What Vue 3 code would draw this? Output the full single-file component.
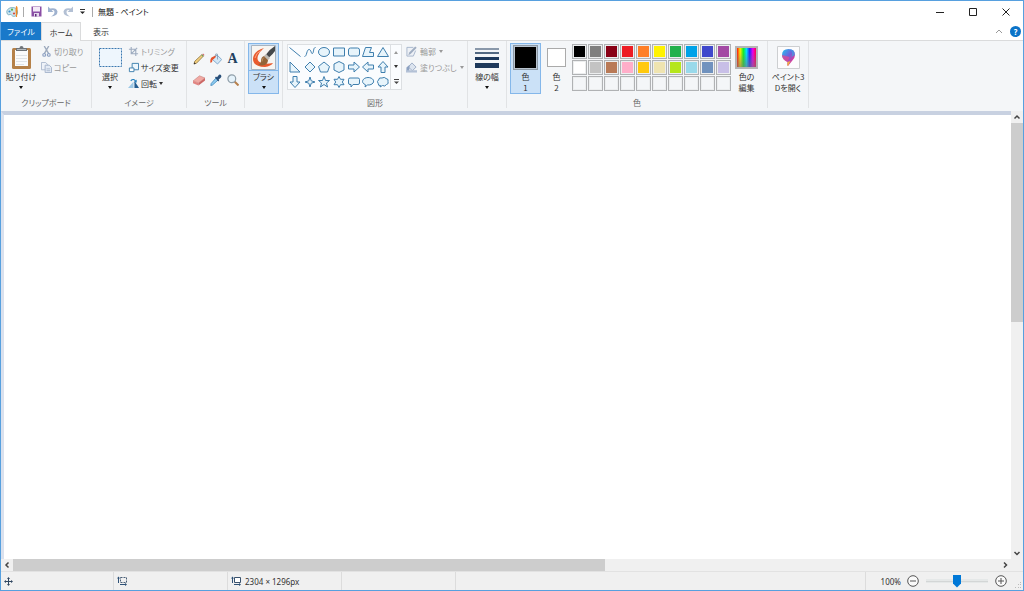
<script setup>
import { ref } from 'vue'

// palette, three rows of ten (the last row is for custom colours)
const colors = [
  '#000000', '#7f7f7f', '#880015', '#ed1c24', '#ff7f27', '#fff200', '#22b14c', '#00a2e8', '#3f48cc', '#a349a4',
  '#ffffff', '#c3c3c3', '#b97a57', '#ffaec9', '#ffc90e', '#efe4b0', '#b5e61d', '#99d9ea', '#7092be', '#c8bfe7',
  '', '', '', '', '', '', '', '', '', ''
]

// outlines for the shape gallery, on a 14 x 14 grid
const shapes = [
  { name: '直線', d: 'M1.500 2.500L12.500 11.500' },
  { name: '曲線', d: 'M1.500 11.500C4 11.500 3.500 4.500 6 4.500S8 9.500 9.500 8.500S10 2.500 12.500 2.500' },
  { name: '楕円', d: 'M1.500 7a5.500 4.500 0 1 0 11 0a5.500 4.500 0 1 0 -11 0z' },
  { name: '四角形', d: 'M1.500 3h11v8h-11z' },
  { name: '角丸四角形', d: 'M3.500 3h7q2 0 2 2v4q0 2-2 2h-7q-2 0-2-2v-4q0-2 2-2z' },
  { name: '多角形', d: 'M4.500 2.500H10.500L8.500 7.500H12.500V11.500H1.500z' },
  { name: '三角形', d: 'M7 2.500L12.500 11.500h-11z' },
  { name: '直角三角形', d: 'M2 2L12 12H2z' },
  { name: 'ひし形', d: 'M7 2L12 7L7 12L2 7z' },
  { name: '五角形', d: 'M7 2L12.500 6.500L10.500 12h-7L1.500 6.500z' },
  { name: '六角形', d: 'M7 1.500L12 4v6L7 12.500L2 10V4z' },
  { name: '右矢印', d: 'M1.500 5h5.500V2L12.500 7L7 12V9H1.500z' },
  { name: '左矢印', d: 'M12.500 5H7V2L1.500 7L7 12V9h5.500z' },
  { name: '上矢印', d: 'M5 12.500V7H2L7 1.500L12 7H9v5.500z' },
  { name: '下矢印', d: 'M5 1.500V7H2L7 12.500L12 7H9V1.500z' },
  { name: '星 4', d: 'M7 2L8.200 5.800L12 7L8.200 8.200L7 12L5.800 8.200L2 7L5.800 5.800z' },
  { name: '星 5', d: 'M7 1.500L8.500 5.500H12.500L9.500 8L10.500 12L7 9.500L3.500 12L4.500 8L1.500 5.500H5.500z' },
  { name: '星 6', d: 'M7 1.500L8.500 4.300H12L10.300 7L12 9.700H8.500L7 12.500L5.500 9.700H2L3.700 7L2 4.300H5.500z' },
  { name: '角丸吹き出し', d: 'M3 3h8q1.500 0 1.500 1.500v3.500q0 1.500-1.500 1.500H6L4 12V9.500H3Q1.500 9.500 1.500 8V4.500Q1.500 3 3 3z' },
  { name: '楕円吹き出し', d: 'M4 12L4.500 9.800C-1 7.500 2 2.500 7 2.500S14.500 6.500 11 9Q9 10.300 6.500 10z' },
  { name: '雲吹き出し', d: 'M4.500 10.500Q2 11 2.200 8.500Q.5 6.500 2.500 5Q3 2 6 3Q8.500 1.500 10 3.500Q13 4 12 6.500Q13 9 10.500 9.500Q9 12 6.500 10.500L4 12z' }
]

const zoom = ref(50)
const activeColor = ref(1)
</script>

<template>
  <div class="window" lang="ja">
    <!-- Title bar -->
    <header class="titlebar">
      <svg class="logo" viewBox="0 0 13 13">
        <path d="M1 8C0 5 3 2.500 6.500 2.500S12 5 11.500 8S8 12 6.500 11S5.500 9 4 9.500S1.500 10 1 8z" fill="#cfe6ee" stroke="#6aa5ba" stroke-width=".8" />
        <circle cx="3.500" cy="6.500" r="1.100" fill="#3c91cf" />
        <circle cx="6" cy="4.700" r="1.100" fill="#55ae47" />
        <circle cx="8" cy="8.500" r="1.100" fill="#d94b3c" />
        <path d="M10 1q2 0 1.500 4l-.5 7h-1L9.500 5z" fill="#f08b24" />
      </svg>
      <span class="bar"></span>
      <button class="quick" aria-label="上書き保存">
        <svg viewBox="0 0 11 11"><path d="M.5.5h10v10H.5z" fill="#8a4ea5" /><path d="M2 1h7v4.500H2z" fill="#f3eaf7" /><path d="M3 7h5v3.500H3z" fill="#e4d8ec" /><path d="M4 8h1.500v2.500H4z" fill="#5b2b78" /></svg>
      </button>
      <button class="quick" aria-label="元に戻す">
        <svg viewBox="0 0 11 11"><path d="M1 .5v5.500h5.500L4.600 4.200Q7.500 3.500 7.500 6Q7.500 8.500 4 10.500Q10.500 10 10.500 5.500Q9.500 1 3 2.500z" fill="#9fb2cf" /></svg>
      </button>
      <button class="quick" aria-label="やり直し">
        <svg viewBox="0 0 11 11"><path d="M10 .5v5.500H4.500l1.900-1.800Q3.500 3.500 3.500 6Q3.500 8.500 7 10.500Q.5 10 .5 5.500Q1.500 1 8 2.500z" fill="#b3c0d4" /></svg>
      </button>
      <button class="quick more" aria-label="クイック アクセス ツール バーのカスタマイズ">
        <svg viewBox="0 0 7 7"><path d="M1 1.500h5" stroke="#333" /><path d="M1 3.500h5L3.500 6z" fill="#222" /></svg>
      </button>
      <span class="bar"></span>
      <h1>無題 - ペイント</h1>
      <div class="controls">
        <button aria-label="最小化"><svg viewBox="0 0 10 10"><path d="M1 5.500h8" /></svg></button>
        <button aria-label="最大化"><svg viewBox="0 0 10 10"><path d="M1.500 1.500h7v7h-7z" /></svg></button>
        <button aria-label="閉じる"><svg viewBox="0 0 10 10"><path d="M1.500 1.500l7 7M8.500 1.500l-7 7" /></svg></button>
      </div>
    </header>

    <!-- Tabs -->
    <nav class="tabs">
      <button class="tab file">ファイル</button>
      <button class="tab current">ホーム</button>
      <button class="tab">表示</button>
      <div class="tab-tools">
        <button aria-label="リボンの最小化"><svg viewBox="0 0 10 10"><path d="M2 7L5 4l3 3" fill="none" stroke="#999" /></svg></button>
        <button class="help" aria-label="ヘルプ">?</button>
      </div>
    </nav>

    <!-- Ribbon -->
    <div class="ribbon">
      <section class="group clipboard">
        <div class="body">
          <button class="big">
            <span class="pic">
              <svg width="21" height="25" viewBox="0 0 21 25">
                <rect x="1" y="3" width="19" height="21" rx="1.500" fill="#b58149" />
                <rect x="4" y="5" width="13" height="16" fill="#fafbfc" />
                <path d="M5 10.500h11M5 13.500h11M5 16.500h11M5 19.500h8" stroke="#dfe3e7" />
                <path d="M5 6V3h3.500Q8.500 1 10.500 1t2 2H16V6z" fill="#6f7479" />
                <path d="M6 4.500h9" stroke="#b5babd" />
              </svg>
            </span>
            <span>貼り付け</span>
            <i class="down"></i>
          </button>
          <div class="stack">
            <button class="small" disabled>
              <svg viewBox="0 0 12 12"><path d="M3.500 0l5 8.500M8.500 0l-5 8.500" stroke="#9daabd" stroke-width="1.500" fill="none" /><circle cx="3.500" cy="9.700" r="1.500" fill="none" stroke="#8ea2c4" stroke-width="1.300" /><circle cx="8.500" cy="9.700" r="1.500" fill="none" stroke="#8ea2c4" stroke-width="1.300" /></svg>
              切り取り
            </button>
            <button class="small" disabled>
              <svg viewBox="0 0 12 12"><path d="M.5.500h4.500l2 2v6H.5z" fill="#eef2f8" stroke="#a9b7cd" /><path d="M4.500 3.500h4.500l2.500 2.500v5.500h-7z" fill="#e4ebf5" stroke="#a2b1c9" /><path d="M6 7.500h4M6 9.500h4" stroke="#a9b7cd" /></svg>
              コピー
            </button>
          </div>
        </div>
        <h2>クリップボード</h2>
      </section>

      <section class="group image">
        <div class="body">
          <button class="big">
            <span class="pic">
              <svg width="23" height="19" viewBox="0 0 23 19"><path d="M.5.5h22v18H.5z" fill="#eef6fd" stroke="#3a78b0" stroke-dasharray="2 1" /></svg>
            </span>
            <span>選択</span>
            <i class="down"></i>
          </button>
          <div class="stack">
            <button class="small" disabled>
              <svg viewBox="0 0 12 12"><path d="M3.500 1v7.500H11M1 3.500h7.500V11M3.500 8.500L10 2" fill="none" stroke="#9eacc0" stroke-width="1.200" /></svg>
              トリミング
            </button>
            <button class="small">
              <svg viewBox="0 0 12 12"><path d="M4.500 1.500h7v7h-7z" fill="#eef7fd" stroke="#397cac" /><path d="M1.500 6.500h5v4h-5z" fill="#fff" stroke="#397cac" /></svg>
              サイズ変更
            </button>
            <button class="small">
              <svg viewBox="0 0 12 12"><path d="M6 4v7H0z" fill="#9cc8e6" /><path d="M7 3l5 8H7z" fill="#235d91" /><path d="M3 3Q6 0 8.500 3.500" fill="none" stroke="#1e7dbd" stroke-width="1.200" /><path d="M9.500 1.500v3.500H6.500z" fill="#1e7dbd" /></svg>
              回転 <i class="down"></i>
            </button>
          </div>
        </div>
        <h2>イメージ</h2>
      </section>

      <section class="group tools">
        <div class="body tool-grid">
          <button aria-label="鉛筆"><svg viewBox="0 0 12 12"><path d="M1 11l.8-2.800L8.800 1.700l1.500 1.500L3.500 10.200z" fill="#f3cf7c" stroke="#8d7440" stroke-width=".8" /><path d="M8.300 2.200l1-1 1.500 1.500-1 1z" fill="#6fa05c" /><path d="M9.300 1.200l.8-.7L11.500 2l-.7.700z" fill="#d5636a" /><path d="M.8 11.200l.5-2L2.800 10.700z" fill="#333" /></svg></button>
          <button aria-label="塗りつぶし"><svg viewBox="0 0 12 12"><path d="M2.500 6.500l4.500-4.500L11.700 6.500L7.500 11z" fill="#d3e7f6" stroke="#7ba5cb" stroke-width=".9" /><path d="M7.500 6.500V1.200Q5.500-.5 5 3.500" fill="none" stroke="#8098ad" stroke-width=".8" /><path d="M5.500 2.500L1.500 4.500Q-.2 6.500 .5 10Q2.500 9.500 2.500 7L5.500 4.500z" fill="#e5532c" /></svg></button>
          <button class="letter" aria-label="テキスト">A</button>
          <button aria-label="消しゴム"><svg viewBox="0 0 12 12"><path d="M0 7l6.500-5.200L12 4L5.500 9z" fill="#f0aaa4" stroke="#c98482" stroke-width=".6" /><path d="M0 7l5.500 2V11.500L0 9.200z" fill="#e28582" /><path d="M5.500 9l6.500-5v2.500l-6.500 5z" fill="#cd6866" /></svg></button>
          <button aria-label="色の選択"><svg viewBox="0 0 12 12"><path d="M6 4l2 2-5.500 5L.8 11.500 1.200 9.500z" fill="#8ecbf0" stroke="#3b86bd" stroke-width=".8" /><path d="M5 3.500l1-1 1 .7L9 .8q1.500-.7 2.200.8T10.500 4L8.700 5.500l.5 1-1 1z" fill="#294e78" /></svg></button>
          <button aria-label="拡大鏡"><svg viewBox="0 0 12 12"><path d="M7.500 7.500l4 4" stroke="#b8814d" stroke-width="2" /><circle cx="4.800" cy="4.800" r="3.900" fill="#e5f2fa" stroke="#8f9ea9" stroke-width="1.200" /></svg></button>
        </div>
        <h2>ツール</h2>
      </section>

      <section class="group brush">
        <div class="body">
          <button class="big selected">
            <span class="pic split">
              <svg width="25" height="25" viewBox="0 0 25 25">
                <path d="M.5.5h24v24H.5z" fill="#f7f5f2" stroke="#a9b4c0" />
                <path d="M13 3C6 5 2 9 2 14S6 22 14 22Q20 21 22 18Q17 19 12 18.500Q6 17 6.500 13Q7 8 13 3z" fill="#e95a2e" />
                <path d="M11 5Q4.500 8 4 13" fill="none" stroke="#f6a284" />
                <path d="M24 1Q19 4 15 9.500l3 3Q22 9 24 6z" fill="#45484a" />
                <path d="M15 9l4 4-2 2-4-4z" fill="#bdbab2" />
                <path d="M13 11l4 4q0 5-6 5.500q-2 0-4-1.500q3 0 3-3q0-4 3-5z" fill="#926439" />
                <path d="M13 12.500q-2 1-2 4" fill="none" stroke="#c09361" />
              </svg>
            </span>
            <span>ブラシ</span>
            <i class="down"></i>
          </button>
        </div>
      </section>

      <section class="group shapes">
        <div class="body">
          <div class="gallery">
            <div class="shape-grid">
              <button v-for="shape in shapes" :key="shape.name" :aria-label="shape.name">
                <svg viewBox="0 0 14 14"><path :d="shape.d" /></svg>
              </button>
            </div>
            <div class="gallery-scroll">
              <button disabled aria-label="上へ"><i class="up"></i></button>
              <button aria-label="下へ"><i class="down"></i></button>
              <button aria-label="一覧"><svg viewBox="0 0 7 7"><path d="M1 1.500h5" stroke="#444" /><path d="M1 3.500h5L3.500 6z" fill="#444" /></svg></button>
            </div>
          </div>
          <div class="stack">
            <button class="small" disabled>
              <svg viewBox="0 0 12 12"><path d="M8 1.500H1v9.500h7L10.500 5" fill="#eef1f6" stroke="#a4b3ca" /><path d="M2.500 10l1-3L10 .5l1.700 1.500L5 8.700z" fill="#a0aec2" /></svg>
              輪郭 <i class="down"></i>
            </button>
            <button class="small" disabled>
              <svg viewBox="0 0 12 12"><path d="M2.500 5.500l4-4.500 4.500 4.500-4 4z" fill="#dce4ef" stroke="#9aabc4" /><path d="M4 3L.5 6v4h3z" fill="#8da2c1" /><path d="M0 9h12v2.500H0z" fill="#b3c1d6" /></svg>
              塗りつぶし <i class="down"></i>
            </button>
          </div>
        </div>
        <h2>図形</h2>
      </section>

      <section class="group size">
        <div class="body">
          <button class="big">
            <span class="pic">
              <svg width="24" height="22" viewBox="0 0 24 22" fill="#1e395b"><path d="M0 1h24v2H0z" opacity=".5" /><path d="M0 5h24v2H0z" opacity=".75" /><path d="M0 10h24v3H0z" /><path d="M0 16h24v5H0z" /></svg>
            </span>
            <span>線の幅</span>
            <i class="down"></i>
          </button>
        </div>
      </section>

      <section class="group color">
        <div class="body">
          <button class="big" :class="{ selected: activeColor === 1 }" @click="activeColor = 1">
            <span class="pic"><b class="chip front"></b></span>
            <span>色</span>
            <span>1</span>
          </button>
          <button class="big" :class="{ selected: activeColor === 2 }" @click="activeColor = 2">
            <span class="pic"><b class="chip back"></b></span>
            <span>色</span>
            <span>2</span>
          </button>
          <div class="palette">
            <button v-for="(color, i) in colors" :key="i" :aria-label="color || '空き'" :style="{ backgroundColor: color || 'transparent' }"></button>
          </div>
          <button class="big">
            <span class="pic"><b class="chip rainbow"></b></span>
            <span>色の</span>
            <span>編集</span>
          </button>
        </div>
        <h2>色</h2>
      </section>

      <section class="group paint3d">
        <div class="body">
          <button class="big">
            <span class="pic">
              <svg width="23" height="23" viewBox="0 0 23 23">
                <defs>
                  <linearGradient id="drop" x1="0" y1="0" x2="1" y2="1">
                    <stop offset="0" stop-color="#20c7ef" /><stop offset=".45" stop-color="#6b62df" /><stop offset=".75" stop-color="#d93a9b" /><stop offset="1" stop-color="#f05a44" />
                  </linearGradient>
                </defs>
                <path d="M.5.5h22v22H.5z" fill="#fcfcfd" stroke="#cdcfd1" />
                <path d="M5 9Q5 3 11.500 3T18 9q0 3-3 6l-4 5q-1 0-.5-4Q5 13 5 9z" fill="url(#drop)" />
                <path d="M5 9q0 5 5.500 7l2-5z" fill="#e54790" opacity=".75" />
                <path d="M10.500 16l3-1-2.500 5q-1 0-.5-4z" fill="#f3b13b" />
                <path d="M11.500 3q5 1 3 8L18 9q0-6-6.500-6z" fill="#30a9eb" opacity=".6" />
              </svg>
            </span>
            <span>ペイント3</span>
            <span>Dを開く</span>
          </button>
        </div>
      </section>
    </div>

    <!-- Drawing area with its scroll bars -->
    <main class="workspace">
      <div class="canvas"></div>
      <div class="vscroll">
        <button aria-label="上へスクロール"><svg viewBox="0 0 10 10"><path d="M2.500 6.500L5 4l2.500 2.500" /></svg></button>
        <div class="track"><div class="thumb"></div></div>
        <button aria-label="下へスクロール"><svg viewBox="0 0 10 10"><path d="M2.500 4L5 6.500 7.500 4" /></svg></button>
      </div>
      <div class="hscroll">
        <button aria-label="左へスクロール"><svg viewBox="0 0 10 10"><path d="M6.500 2.500L4 5l2.500 2.500" /></svg></button>
        <div class="track"><div class="thumb"></div></div>
        <button aria-label="右へスクロール"><svg viewBox="0 0 10 10"><path d="M4 2.500L6.500 5 4 7.500" /></svg></button>
      </div>
    </main>

    <!-- Status bar -->
    <footer class="status">
      <div class="cell">
        <svg width="9" height="9" viewBox="0 0 9 9"><path d="M4.500 1v7M1 4.500h7" stroke="#2f4660" /><path d="M3 2l1.500-2L6 2zM3 7l1.500 2L6 7zM2 3L0 4.500 2 6zM7 3l2 1.500L7 6z" fill="#2f4660" /></svg>
      </div>
      <div class="cell">
        <svg width="10" height="10" viewBox="0 0 10 10"><path d="M3.500 1.500h6v5h-6z" fill="none" stroke="#4a5f77" stroke-dasharray="2 1" /><path d="M1.500 1v6M3 8.500h6" stroke="#2f5277" /><path d="M0 2.500L1.500.500 3 2.500zM8 7l2 1.500L8 10z" fill="#2f5277" /></svg>
      </div>
      <div class="cell">
        <svg width="10" height="10" viewBox="0 0 10 10"><path d="M3.500 1.500h6v5h-6z" fill="#fff" stroke="#3a526d" /><path d="M1.500 1v6M3 8.500h6" stroke="#2f5277" /><path d="M0 2.500L1.500.500 3 2.500zM8 7l2 1.500L8 10z" fill="#2f5277" /></svg>
        <span>2304 × 1296px</span>
      </div>
      <div class="cell"></div>
      <div class="cell wide"></div>
      <div class="zoom">
        <label for="zoom">100%</label>
        <button aria-label="縮小"><svg viewBox="0 0 12 12"><circle cx="6" cy="6" r="5.300" /><path d="M3 6h6" /></svg></button>
        <input id="zoom" v-model="zoom" type="range" min="0" max="100" />
        <button aria-label="拡大"><svg viewBox="0 0 12 12"><circle cx="6" cy="6" r="5.300" /><path d="M3 6h6M6 3v6" /></svg></button>
      </div>
      <svg class="grip" width="7" height="7" viewBox="0 0 7 7" fill="#bbb"><path d="M5 0h1v1H5zM5 2h1v1H5zM5 5h1v1H5zM3 2h1v1H3zM3 5h1v1H3zM0 5h1v1H0z" /></svg>
    </footer>
  </div>
</template>

<style>
body {
  margin: 0;
}
</style>

<style scoped>
* {
  box-sizing: border-box;
}

.window {
  display: flex;
  flex-direction: column;
  height: 100vh;
  border: 1px solid #57a0df;
  background: #fff;
  color: #333;
  font-family: "Noto Sans CJK JP", "Noto Sans", sans-serif;
  font-feature-settings: "palt";
  font-size: 8px;
  line-height: 11px;
}

button {
  display: flex;
  align-items: center;
  justify-content: center;
  margin: 0;
  padding: 0;
  border: 0;
  background: none;
  color: inherit;
  font: inherit;
  font-feature-settings: inherit;
  white-space: nowrap;
}

svg {
  display: block;
  flex: none;
}

h1,
h2 {
  margin: 0;
  font-size: 8px;
  font-weight: normal;
}

/* title bar */
.titlebar {
  display: flex;
  align-items: center;
  height: 21px;
  padding-left: 5px;
}

.logo {
  width: 13px;
  height: 13px;
}

.bar {
  width: 1px;
  height: 10px;
  margin: 0 4px;
  background: #aaa;
}

.bar + h1 {
  padding-left: 1px;
}

.quick {
  width: 16px;
  height: 16px;
}

.quick svg {
  width: 11px;
  height: 11px;
}

.quick.more {
  width: 12px;
}

.quick.more svg {
  width: 7px;
  height: 7px;
}

h1 {
  color: #111;
}

.controls {
  display: flex;
  margin-left: auto;
  padding-right: 1px;
}

.controls button {
  width: 33px;
  height: 20px;
}

.controls svg {
  width: 10px;
  height: 10px;
  fill: none;
  stroke: #222;
}

/* tabs */
.tabs {
  display: flex;
  height: 18px;
}

.tab {
  width: 40px;
}

.tab.file {
  background: #1979ca;
  color: #fff;
}

.tab.current {
  position: relative;
  height: 19px;
  border: 1px solid #dadbdc;
  border-bottom: 0;
  background: #f5f6f7;
}

.tab-tools {
  display: flex;
  align-items: center;
  gap: 6px;
  margin-left: auto;
  padding-right: 2px;
}

.tab-tools svg {
  width: 10px;
  height: 10px;
}

.help {
  width: 11px;
  height: 11px;
  border-radius: 50%;
  background: #0b73c8;
  color: #fff;
  font-weight: bold;
}

/* ribbon */
.ribbon {
  display: flex;
  height: 71px;
  border-top: 1px solid #dadbdc;
  background: #f4f6f8;
}

.group {
  display: flex;
  flex: none;
  flex-direction: column;
  margin-bottom: 3px;
  padding-top: 2px;
  border-right: 1px solid #e1e3e5;
}

.group h2 {
  color: #666;
  text-align: center;
}

.body {
  display: flex;
  height: 55px;
}

.clipboard { width: 91px; }
.image { width: 95px; }
.tools { width: 58px; }
.brush { width: 38px; }
.shapes { width: 185px; }
.size { width: 39px; }
.color { width: 261px; }
.paint3d { width: 41px; }

.big {
  flex-direction: column;
  justify-content: flex-start;
  width: 31px;
  height: 51px;
  border: 1px solid transparent;
}

.big > span:not(.pic) {
  height: 11px;
}

.big.selected {
  border-color: #84b7ea;
  background: #cbe1f7;
}

.pic {
  display: flex;
  align-items: center;
  justify-content: center;
  width: 100%;
  height: 27px;
}

.pic.split {
  border-bottom: 1px solid #84b7ea;
}

.down,
.up {
  width: 0;
  height: 0;
  border: 2px solid transparent;
}

.down {
  border-top: 3px solid currentColor;
  border-bottom: 0;
}

.up {
  border-bottom: 3px solid currentColor;
  border-top: 0;
}

.big .down {
  margin-top: 4px;
  color: #111;
}

.stack {
  display: flex;
  flex-direction: column;
}

.small {
  justify-content: flex-start;
  gap: 2px;
  height: 16px;
}

.small:disabled,
.gallery-scroll button:disabled {
  color: #999;
}

.small svg {
  width: 11px;
  height: 11px;
}

.clipboard .big {
  width: 40px;
}

.image .big {
  width: 36px;
}

.tool-grid {
  display: grid;
  grid-template-columns: repeat(3, 17px);
  grid-template-rows: repeat(2, 21px);
  align-content: start;
  justify-content: center;
  padding-top: 5px;
}

.tool-grid svg {
  width: 12px;
  height: 12px;
}

.letter {
  color: #22405f;
  font-family: "Liberation Serif", serif;
  font-size: 14px;
  font-weight: bold;
}

.brush .body {
  justify-content: center;
}

.gallery {
  display: flex;
  width: 115px;
  height: 46px;
  margin: 1px 4px 0;
  border: 1px solid #dcdfe2;
  background: #fafcfe;
}

.shapes .small {
  gap: 3px;
}

.shape-grid {
  display: grid;
  flex: 1;
  grid-template-columns: repeat(7, 1fr);
  grid-template-rows: repeat(3, 1fr);
}

.shape-grid svg {
  width: 14px;
  height: 14px;
  fill: #e7f4fb;
  stroke: #3f7fae;
}

.shape-grid button:nth-child(-n + 2) svg {
  fill: none;
}

.gallery-scroll {
  display: grid;
  grid-template-rows: repeat(3, 1fr);
  width: 11px;
  border-left: 1px solid #dcdfe2;
}

.gallery-scroll svg {
  width: 7px;
  height: 7px;
}

.size .body,
.paint3d .body {
  justify-content: center;
}

.size .big,
.paint3d .big {
  width: 36px;
}

.color .body {
  padding-left: 3px;
}

.chip {
  width: 19px;
  height: 19px;
  border: 1px solid #aaa;
  background: #fff;
}

.chip.front {
  width: 25px;
  height: 25px;
  border: 1px solid #8c99a6;
  background: #000;
  box-shadow: inset 0 0 0 1px #b9c4cf;
}

.chip.rainbow {
  width: 23px;
  height: 23px;
  border: 2px solid #b5b5b5;
  background: linear-gradient(transparent 20%, #7779), linear-gradient(90deg, #f11, #fe0, #1e2, #0df, #22f, #e0e, #f04);
}

.palette {
  display: grid;
  grid-template-columns: repeat(10, 15px);
  grid-auto-rows: 15px;
  gap: 1px;
  height: 47px;
  margin: 1px 0 0;
}

.palette button {
  border: 1px solid #b0b2b4;
  box-shadow: inset 0 0 0 1px #eceeef;
}

/* workspace */
.workspace {
  display: grid;
  flex: 1;
  grid-template-columns: 1fr 12px;
  grid-template-rows: 1fr 12px;
  min-height: 0;
  background: #f0f0f0;
}

.canvas {
  border-top: 4px solid #c8d1e1;
  border-left: 3px solid #dae1ee;
  background: #fff;
}

.vscroll,
.hscroll {
  display: flex;
}

.vscroll {
  flex-direction: column;
}

.hscroll {
  grid-column: 1 / -1;
  padding-right: 12px;
}

.vscroll button,
.hscroll button {
  flex: none;
  width: 12px;
  height: 12px;
}

.vscroll svg,
.hscroll svg {
  width: 10px;
  height: 10px;
  fill: none;
  stroke: #444;
  stroke-width: 1.5;
}

.track {
  flex: 1;
}

.thumb {
  background: #cdcdcd;
}

.vscroll .thumb {
  height: 47%;
}

.hscroll .thumb {
  width: 60%;
  height: 100%;
}

/* status bar */
.status {
  display: flex;
  align-items: center;
  height: 19px;
  border-top: 1px solid #e2e2e2;
  background: #f0f0f0;
  font-family: "Noto Sans", sans-serif;
}

.cell {
  display: flex;
  align-items: center;
  gap: 4px;
  width: 114px;
  height: 18px;
  padding-left: 3px;
  border-right: 1px solid #dcdcdc;
}

.cell:first-child {
  width: 113px;
}

.cell.wide {
  flex: 1;
}

.zoom {
  display: flex;
  align-items: center;
  gap: 6px;
}

.zoom label {
  margin-left: 15px;
}

.zoom button svg {
  width: 12px;
  height: 12px;
  fill: #fafafa;
  stroke: #555;
}

.zoom input {
  width: 62px;
  height: 14px;
  margin: 0 1px;
  appearance: none;
  background: linear-gradient(#d3d6d6, #d3d6d6) center / 100% 1px no-repeat, linear-gradient(#e5e8e8, #e5e8e8) center / 100% 4px no-repeat;
}

.zoom input::-webkit-slider-thumb {
  width: 8px;
  height: 13px;
  appearance: none;
  background: #0078d7;
  clip-path: polygon(0 0, 100% 0, 100% 70%, 50% 100%, 0 70%);
}

.grip {
  align-self: flex-end;
  margin: 0 1px 1px 8px;
}
</style>
